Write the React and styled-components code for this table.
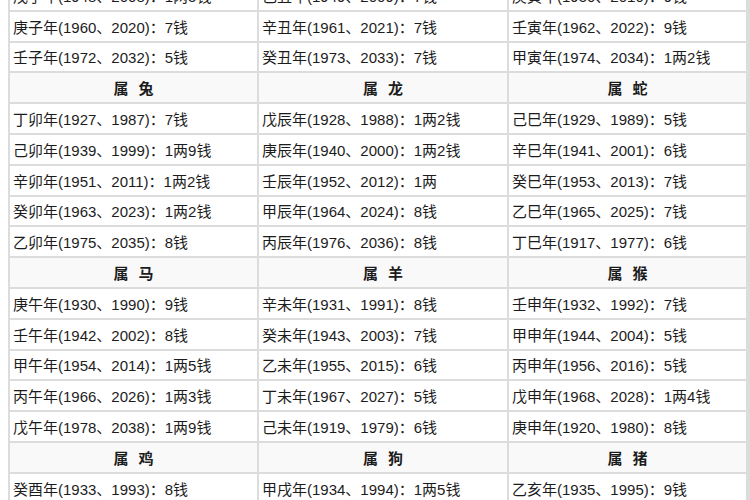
import React from 'react'
import styled, { createGlobalStyle } from 'styled-components'

const GlobalStyle = createGlobalStyle`
  html, body {
    margin: 0;
    padding: 0;
    background: #fff;
    overflow: hidden;
  }
`

const Page = styled.div`
  width: 750px;
  height: 500px;
  overflow: hidden;
  padding-left: 8px;
  box-sizing: border-box;
`

const Grid = styled.div`
  margin-top: -19px;
  width: 740px;
  display: grid;
  grid-template-columns: 247px 248px 237px;
  grid-auto-rows: 28.8px;
  gap: 2px;
  padding: 0 2px;
  background: #dcdcdc;
  font-family: "Liberation Sans", "Noto Sans CJK SC", sans-serif;
  font-size: 15px;
  color: #1c1c1c;
`

const Cell = styled.div`
  background: #fff;
  display: flex;
  align-items: center;
  padding-left: 3px;
  white-space: nowrap;
`

const HeadCell = styled(Cell)`
  background: #f9f9f9;
  justify-content: center;
  padding-left: 0;
  font-weight: bold;
  word-spacing: 6px;
`

const rows = [
  ['戊子年(1948、2008)：1两5钱', '己丑年(1949、2009)：7钱', '庚寅年(1950、2010)：9钱'],
  ['庚子年(1960、2020)：7钱', '辛丑年(1961、2021)：7钱', '壬寅年(1962、2022)：9钱'],
  ['壬子年(1972、2032)：5钱', '癸丑年(1973、2033)：7钱', '甲寅年(1974、2034)：1两2钱'],
  ['属 兔', '属 龙', '属 蛇'],
  ['丁卯年(1927、1987)：7钱', '戊辰年(1928、1988)：1两2钱', '己巳年(1929、1989)：5钱'],
  ['己卯年(1939、1999)：1两9钱', '庚辰年(1940、2000)：1两2钱', '辛巳年(1941、2001)：6钱'],
  ['辛卯年(1951、2011)：1两2钱', '壬辰年(1952、2012)：1两', '癸巳年(1953、2013)：7钱'],
  ['癸卯年(1963、2023)：1两2钱', '甲辰年(1964、2024)：8钱', '乙巳年(1965、2025)：7钱'],
  ['乙卯年(1975、2035)：8钱', '丙辰年(1976、2036)：8钱', '丁巳年(1917、1977)：6钱'],
  ['属 马', '属 羊', '属 猴'],
  ['庚午年(1930、1990)：9钱', '辛未年(1931、1991)：8钱', '壬申年(1932、1992)：7钱'],
  ['壬午年(1942、2002)：8钱', '癸未年(1943、2003)：7钱', '甲申年(1944、2004)：5钱'],
  ['甲午年(1954、2014)：1两5钱', '乙未年(1955、2015)：6钱', '丙申年(1956、2016)：5钱'],
  ['丙午年(1966、2026)：1两3钱', '丁未年(1967、2027)：5钱', '戊申年(1968、2028)：1两4钱'],
  ['戊午年(1978、2038)：1两9钱', '己未年(1919、1979)：6钱', '庚申年(1920、1980)：8钱'],
  ['属 鸡', '属 狗', '属 猪'],
  ['癸酉年(1933、1993)：8钱', '甲戌年(1934、1994)：1两5钱', '乙亥年(1935、1995)：9钱'],
  ['乙酉年(1945、2005)：1两5钱', '丙戌年(1946、2006)：6钱', '丁亥年(1947、2007)：1两6钱']
]

export default function App () {
  return (
    <Page>
      <GlobalStyle />
      <Grid>
        {rows.map((row, i) =>
          row.map((text, j) =>
            text.startsWith('属')
              ? <HeadCell key={`${i}-${j}`}>{text}</HeadCell>
              : <Cell key={`${i}-${j}`}>{text}</Cell>
          )
        )}
      </Grid>
    </Page>
  )
}
